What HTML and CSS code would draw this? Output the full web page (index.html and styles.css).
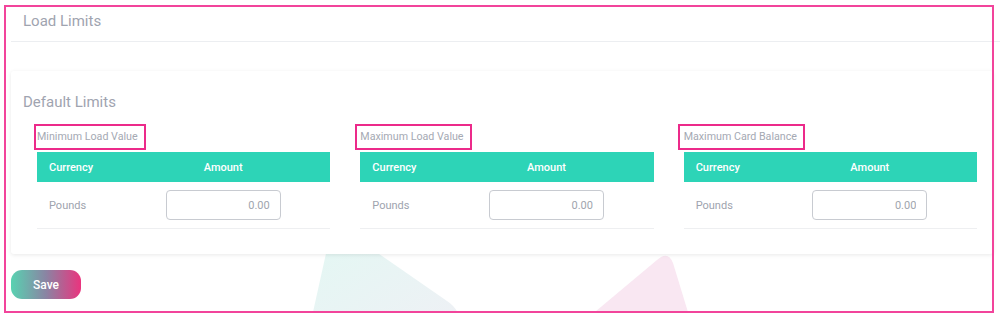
FILE: index.html
```html
<!DOCTYPE html>
<html>
<head>
<meta charset="utf-8">
<link rel="stylesheet" href="styles.css">
</head>
<body>
<div class="page">
  <svg class="decor" width="1000" height="313" viewBox="0 0 1000 313" aria-hidden="true">
    <defs>
      <linearGradient id="tg" x1="0" y1="0" x2="1" y2="1">
        <stop offset="0" stop-color="#e2f8f3"/>
        <stop offset="1" stop-color="#eff0f5"/>
      </linearGradient>
    </defs>
    <path d="M333 222 L309 330 L464 330 L459 315 Q455 306 447 301 Z" fill="url(#tg)"/>
    <path d="M583 322 L657 260 Q668 250 673 263 L691 322 Z" fill="#f9e7f2"/>
  </svg>

  <header class="page-head">
    <h1 class="page-title">Load Limits</h1>
  </header>

  <section class="card">
    <h2 class="card-title">Default Limits</h2>
    <div class="limits">
      <div class="limit">
        <div class="limit-label">Minimum Load Value</div>
        <div class="tbl">
          <div class="tbl-head">
            <span class="c-cur">Currency</span>
            <span class="c-amt">Amount</span>
          </div>
          <div class="tbl-row">
            <span class="c-cur">Pounds</span>
            <span class="c-amt"><input class="amount" type="text" value="0.00"></span>
          </div>
        </div>
      </div>
      <div class="limit">
        <div class="limit-label l2">Maximum Load Value</div>
        <div class="tbl">
          <div class="tbl-head">
            <span class="c-cur">Currency</span>
            <span class="c-amt">Amount</span>
          </div>
          <div class="tbl-row">
            <span class="c-cur">Pounds</span>
            <span class="c-amt"><input class="amount" type="text" value="0.00"></span>
          </div>
        </div>
      </div>
      <div class="limit">
        <div class="limit-label l3">Maximum Card Balance</div>
        <div class="tbl">
          <div class="tbl-head">
            <span class="c-cur">Currency</span>
            <span class="c-amt">Amount</span>
          </div>
          <div class="tbl-row">
            <span class="c-cur">Pounds</span>
            <span class="c-amt"><input class="amount" type="text" value="0.00"></span>
          </div>
        </div>
      </div>
    </div>
  </section>

  <div class="actions">
    <button class="save" type="button">Save</button>
  </div>

  <div class="frame"></div>
</div>
</body>
</html>
```

FILE: styles.css
```css
html, body {
  margin: 0;
  padding: 0;
  background: #ffffff;
}
body {
  width: 1000px;
  height: 320px;
  overflow: hidden;
  font-family: Roboto, "Liberation Sans", Arial, sans-serif;
  color: #9ea3ae;
}
.page {
  position: relative;
  width: 1000px;
  height: 320px;
  padding-left: 11px;
  box-sizing: border-box;
}
.decor {
  position: absolute;
  left: 0;
  top: 0;
  z-index: 0;
}
.page-head {
  position: relative;
  z-index: 1;
  padding: 11px 0 10px 12px;
  border-bottom: 1px solid #eceef1;
}
.page-title {
  margin: 0;
  font-size: 15px;
  line-height: 20px;
  font-weight: 400;
  color: #9fa4b0;
}
.card {
  position: relative;
  z-index: 1;
  width: 982px;
  box-sizing: border-box;
  margin-top: 29px;
  padding: 21px 16px 25px 26px;
  background: #ffffff;
  border-radius: 3px;
  box-shadow: 0 1px 4px rgba(0, 0, 0, 0.09);
}
.card-title {
  margin: 0 0 0 -14px;
  font-size: 15px;
  line-height: 20px;
  font-weight: 400;
  color: #9fa4b0;
}
.limits {
  display: grid;
  grid-template-columns: repeat(3, 1fr);
  column-gap: 30px;
  margin-top: 12px;
}
.limit-label {
  display: inline-block;
  margin-left: -3px;
  padding: 0 6px 0 1px;
  border: 2px solid #ec2a8a;
  font-size: 10.7px;
  line-height: 22px;
  color: #a5a9b3;
  margin-bottom: 2px;
}
.limit-label.l2 {
  margin-left: -5px;
  padding-left: 3px;
}
.limit-label.l3 {
  margin-left: -6px;
  padding-left: 4px;
}
.tbl-head,
.tbl-row {
  display: grid;
  grid-template-columns: 79px 1fr;
  align-items: center;
}
.tbl-head {
  height: 30px;
  background: #2dd4b7;
  color: #ffffff;
  font-size: 11px;
  font-weight: 500;
}
.tbl-row {
  height: 46px;
  border-bottom: 1px solid #eeeff1;
  font-size: 11px;
  color: #9ea3ae;
}
.c-cur {
  padding-left: 12px;
}
.c-amt {
  display: flex;
  justify-content: center;
}
.amount {
  width: 115px;
  height: 30px;
  box-sizing: border-box;
  border: 1px solid #c8cbd1;
  border-radius: 4px;
  padding: 0 10px 0 6px;
  text-align: right;
  font-family: Roboto, "Liberation Sans", Arial, sans-serif;
  font-size: 11px;
  color: #a0a5ae;
  background: #ffffff;
  outline: none;
}
.actions {
  position: relative;
  z-index: 1;
  padding-top: 16px;
}
.save {
  width: 70px;
  height: 29px;
  border: none;
  border-radius: 11px;
  background: linear-gradient(90deg, #58d2b1 0%, #8a84a3 50%, #ea347e 100%);
  color: #ffffff;
  font-family: Roboto, "Liberation Sans", Arial, sans-serif;
  font-size: 12px;
  font-weight: 500;
  padding: 0;
  cursor: pointer;
}
.frame {
  position: absolute;
  left: 4px;
  top: 5px;
  width: 990px;
  height: 308px;
  box-sizing: border-box;
  border: 2px solid #f2449b;
  z-index: 2;
  pointer-events: none;
}
```
